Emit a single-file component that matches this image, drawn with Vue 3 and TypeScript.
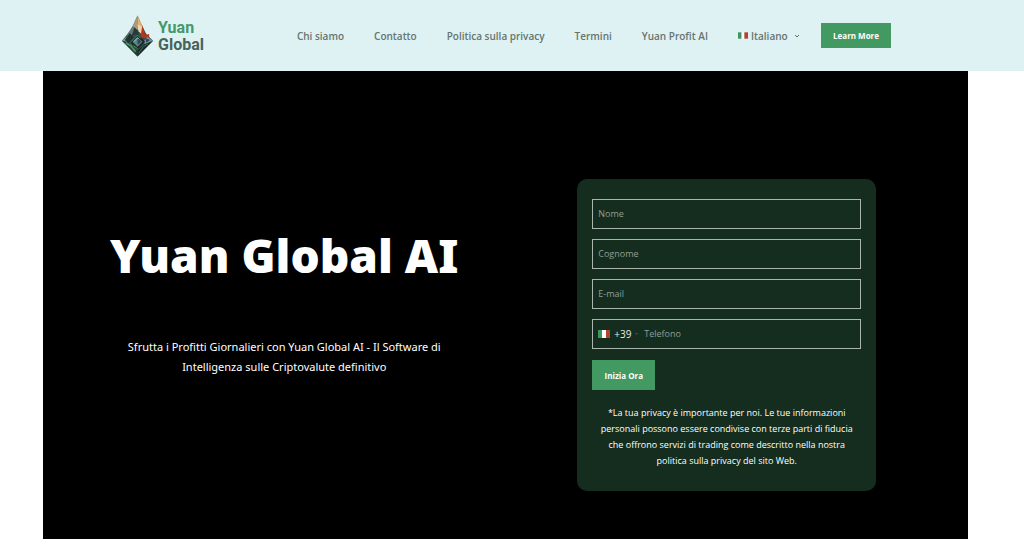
<script setup lang="ts">
import { ref } from 'vue'

interface NavLink {
  label: string
  href: string
}

interface TextField {
  id: string
  label: string
  type: string
}

const links: NavLink[] = [
  { label: 'Chi siamo', href: '#chi-siamo' },
  { label: 'Contatto', href: '#contatto' },
  { label: 'Politica sulla privacy', href: '#privacy' },
  { label: 'Termini', href: '#termini' },
  { label: 'Yuan Profit AI', href: '#yuan-profit-ai' },
]

const fields: TextField[] = [
  { id: 'nome', label: 'Nome', type: 'text' },
  { id: 'cognome', label: 'Cognome', type: 'text' },
  { id: 'email', label: 'E-mail', type: 'email' },
]

const values = ref<Record<string, string>>({ nome: '', cognome: '', email: '' })
const phone = ref('')
const language = ref('it')
const prefix = ref('+39')
</script>

<template>
  <div class="page">
    <header class="header">
      <a class="brand" href="#">
        <svg class="gem" viewBox="0 0 34 42" aria-hidden="true">
          <path d="M17 0 L22 11 L26 19 L33 26 L17 42 L1 26 L9 16 L12 11Z" fill="#33504a" />
          <path d="M17 0 L12 11 L17 15Z" fill="#a99a80" />
          <path d="M17 0 L22 11 L22 17 L17 14Z" fill="#e3b174" />
          <path d="M17 9 L22 12 L22 20 L18 16Z" fill="#ecd6b0" />
          <path d="M22 10 L25 20 L29 19 L29 24 L20 22Z" fill="#b5361f" />
          <path d="M12 11 L16 14 L9 23 L6 20Z" fill="#66767a" />
          <path d="M14 12 L19 18 L11 21Z" fill="#283a3d" />
          <path d="M1 26 L8 20 L11 28Z" fill="#7f9693" />
          <path d="M4 25 L9 18 L13 22 L8 29Z" fill="#1f3430" />
          <path d="M33 26 L27 22 L23 27 L26 31Z" fill="#8097a8" />
          <path d="M25 23 L30 25 L26 28Z" fill="#304454" />
          <path d="M17 19 L25 27 L17 35 L9 27Z" fill="#172b2a" />
          <path d="M10 27 L17 20 L20 23 M13 31 L17 34" fill="none" stroke="#4b9c70" />
          <path d="M17 22 L22 27 L17 32 L12 27Z" fill="#62828b" />
          <path d="M17 23 L21 27 L17 30Z" fill="#33454e" />
          <path d="M13 27 L17 23 L18 24" fill="none" stroke="#a5c5bd" />
          <path d="M1 26 L9 29 L17 36 V42Z" fill="#263c34" />
          <path d="M5 28 L10 31 L15 37" fill="none" stroke="#3f945f" stroke-width="2" />
          <path d="M33 26 L25 29 L17 36 V42Z" fill="#192925" />
          <path d="M28 29 L23 32 L18 39" fill="none" stroke="#486b60" />
        </svg>
        <span class="brand-name"><span class="brand-top">Yuan</span><span>Global</span></span>
      </a>

      <nav class="nav" aria-label="Principale">
        <a v-for="link in links" :key="link.href" class="nav-link" :href="link.href">{{ link.label }}</a>
        <div class="language">
          <svg class="flag-small" viewBox="0 0 11 7" aria-hidden="true">
            <path d="M0 0H4V7H0Z" fill="#3f9460" /><path d="M4 0H7V7H4Z" fill="#fff" /><path d="M7 0H11V7H7Z" fill="#b1432f" />
          </svg>
          <select v-model="language" class="language-select" aria-label="Lingua">
            <option value="it">Italiano</option>
            <option value="en">English</option>
          </select>
          <svg class="chevron" viewBox="0 0 6 6" aria-hidden="true">
            <path d="M1 2 L3 4 L5 2" fill="none" stroke="#5d6f6a" />
          </svg>
        </div>
      </nav>

      <button class="learn" type="button">Learn More</button>
    </header>

    <main class="hero">
      <section class="intro">
        <h1 class="title">Yuan Global AI</h1>
        <p class="lead">Sfrutta i Profitti Giornalieri con Yuan Global AI - Il Software di Intelligenza sulle Criptovalute definitivo</p>
      </section>

      <section class="form-column">
        <form class="card" @submit.prevent>
          <div v-for="field in fields" :key="field.id" class="field">
            <input v-model="values[field.id]" class="input" :type="field.type" :placeholder="field.label" :aria-label="field.label" />
          </div>
          <div class="field">
            <svg class="flag" viewBox="0 0 12 8" aria-hidden="true">
              <path d="M0 0H4V8H0Z" fill="#3f9460" /><path d="M4 0H8V8H4Z" fill="#fff" /><path d="M8 0H12V8H8Z" fill="#b1432f" />
            </svg>
            <select v-model="prefix" class="prefix" aria-label="Prefisso">
              <option value="+39">+39</option>
            </select>
            <svg class="caret" viewBox="0 0 4 2" aria-hidden="true"><path d="M0 0H4L2 2Z" fill="#4d6355" /></svg>
            <input v-model="phone" class="input" type="tel" placeholder="Telefono" aria-label="Telefono" />
          </div>
          <button class="submit" type="submit">Inizia Ora</button>
          <p class="notice">*La tua privacy è importante per noi. Le tue informazioni personali possono essere condivise con terze parti di fiducia che offrono servizi di trading come descritto nella nostra politica sulla privacy del sito Web.</p>
        </form>
      </section>
    </main>
  </div>
</template>

<style>
body {
  background: #fff;
}
</style>

<style scoped>
.page {
  font-family: "Open Sans", "Noto Sans", sans-serif;
  color: #fff;
}

.page * {
  box-sizing: border-box;
}

.header {
  display: flex;
  align-items: center;
  min-height: 71px;
  padding: 0 133px 0 121px;
  background: #def1f3;
}

.brand {
  display: flex;
  align-items: center;
  gap: 4px;
  text-decoration: none;
}

.gem {
  width: 33px;
  height: 42px;
}

.brand-name {
  display: flex;
  flex-direction: column;
  font: 700 16px/17px Roboto, sans-serif;
  color: #46645a;
}

.brand-top {
  color: #43996a;
}

.nav {
  display: flex;
  align-items: center;
  gap: 30px;
  margin-left: auto;
  margin-right: 21px;
}

.nav-link,
.language-select {
  font-family: "Open Sans", sans-serif;
  font-size: 10px;
  line-height: 16px;
  font-weight: 600;
  color: #66756e;
  white-space: nowrap;
  text-decoration: none;
}

.language {
  display: flex;
  align-items: center;
}

.flag-small {
  width: 10px;
  height: 7px;
  margin-right: 3px;
}

.language-select,
.prefix {
  appearance: none;
  padding: 0;
  border: 0;
  background: transparent;
}

.chevron {
  width: 6px;
  height: 6px;
  margin-left: 6px;
}

.learn,
.submit {
  border: 0;
  border-radius: 0;
  background: #439962;
  color: #fff;
  font-family: inherit;
  font-size: 8px;
  font-weight: 700;
  white-space: nowrap;
}

.learn {
  width: 70px;
  height: 25px;
  padding: 0;
}

.hero {
  display: grid;
  grid-template-columns: minmax(0, 1fr) minmax(0, 1fr);
  align-items: center;
  margin: 0 56px 0 43px;
  padding: 108px 20px 48px;
  background: #000;
}

.intro {
  padding: 0 44px 70px;
  text-align: center;
}

.title {
  margin: 0 0 50px;
  font-family: "Noto Sans", sans-serif;
  font-size: 46px;
  line-height: 64px;
  font-weight: 900;
  white-space: nowrap;
}

.lead {
  margin: 0;
  font-family: "Noto Sans", sans-serif;
  font-size: 11px;
  line-height: 20px;
}

.form-column {
  display: flex;
  justify-content: center;
}

.card {
  display: flex;
  flex-direction: column;
  align-items: stretch;
  gap: 10px;
  width: 299px;
  padding: 20px 15px 22px;
  border-radius: 10px;
  background: #152d1e;
}

.field {
  display: flex;
  align-items: center;
  height: 30px;
  padding: 0 5px;
  border: 1px solid #a9b5ad;
}

.input {
  flex: 1;
  min-width: 0;
  padding: 0;
  border: 0;
  outline: 0;
  background: transparent;
  color: #fff;
  font-family: inherit;
  font-size: 9px;
  line-height: 16px;
}

.input::placeholder {
  color: #929e96;
  opacity: 1;
}

.flag {
  width: 12px;
  height: 8px;
  margin-right: 4px;
}

.prefix {
  color: #e6ebe7;
  font-family: inherit;
  font-size: 10px;
  line-height: 16px;
}

.caret {
  width: 3px;
  height: 2px;
  margin: 0 6px 0 3px;
}

.submit {
  align-self: flex-start;
  width: 63px;
  height: 30px;
  margin-top: 1px;
  padding: 0;
}

.notice {
  margin: 5px 0 0;
  padding: 0 5px;
  font-size: 9px;
  line-height: 16px;
  text-align: center;
}
</style>
